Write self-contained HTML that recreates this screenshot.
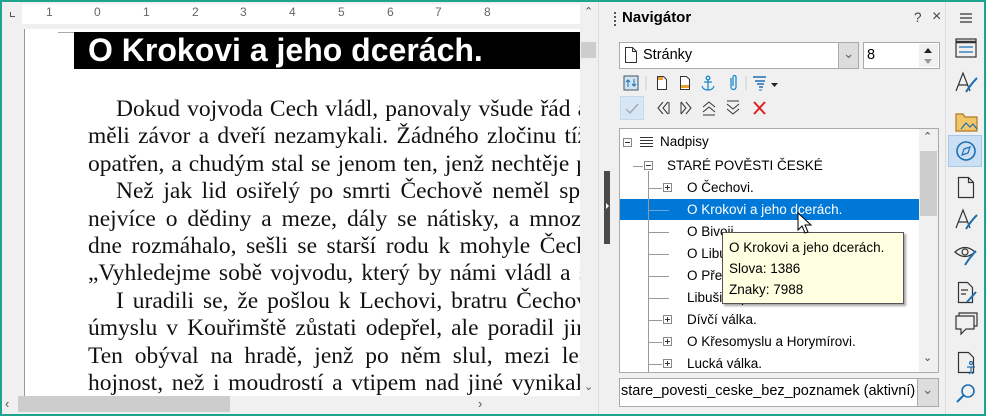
<!DOCTYPE html>
<html><head><meta charset="utf-8"><style>
*{margin:0;padding:0;box-sizing:border-box}
body{width:986px;height:416px;overflow:hidden;background:#f0f0f0;font-family:"Liberation Sans",sans-serif;position:relative}
.abs{position:absolute}
#frame{left:0;top:0;width:986px;height:416px;border:2px solid #1fa58f;z-index:50;pointer-events:none}
.doc{font-family:"Liberation Serif",serif;font-size:23.5px;color:#111;white-space:nowrap}
.doc div{width:500px;text-align:justify;text-align-last:justify;white-space:normal;height:27.4px;overflow:visible}
.ui{font-family:"Liberation Sans","DejaVu Sans",sans-serif;font-size:13.5px;color:#000;white-space:nowrap}
.row{position:absolute;left:0;height:22px;line-height:22px}
.pm{position:absolute;width:9px;height:9px;border:1px solid #888;background:#fff}
.pm:after{content:"";position:absolute;left:1px;top:3px;width:5px;height:1px;background:#333}
.pm.p:before{content:"";position:absolute;left:3px;top:1px;width:1px;height:5px;background:#333}
.hl{position:absolute;height:1px;background:#999}
.vl{position:absolute;width:1px;background:#999}
</style></head><body>
<div id="frame" class="abs"></div>
<div class="abs" style="left:22px;top:4px;width:558px;height:20px;background:#fff"></div>
<div class="abs" style="left:10px;top:12px;width:5px;height:5px;border-left:1px solid #555;border-bottom:1px solid #555"></div>
<div class="abs ui" style="left:22px;top:5px;width:558px;font-size:12px;color:#666">
<span class="abs" style="left:24px">1</span><span class="abs" style="left:72px">0</span><span class="abs" style="left:121px">1</span><span class="abs" style="left:170px">2</span><span class="abs" style="left:218px">3</span><span class="abs" style="left:267px">4</span><span class="abs" style="left:316px">5</span><span class="abs" style="left:365px">6</span><span class="abs" style="left:413px">7</span><span class="abs" style="left:462px">8</span>
</div>
<div class="abs" style="left:24px;top:29px;width:556px;height:367px;background:#fff;border-left:1px solid #999;overflow:hidden">
 <div class="abs" style="left:33px;top:3px;width:20px;height:1px;background:#aaa"></div>
 <div class="abs" style="left:49px;top:3px;width:520px;height:37px;background:#000;color:#fff;font-weight:bold;font-size:32px;line-height:37px;padding-left:14px;white-space:nowrap">O Krokovi a jeho dcerách.</div>
 <div class="doc abs" style="left:63px;top:67px;line-height:27.4px">
  <div style="padding-left:28px">Dokud vojvoda Cech vládl, panovaly všude řád a</div>
  <div>měli závor a dveří nezamykali. Žádného zločinu tíž</div>
  <div>opatřen, a chudým stal se jenom ten, jenž nechtěje p</div>
  <div style="padding-left:28px">Než jak lid osiřelý po smrti Čechově neměl spr</div>
  <div>nejvíce o dědiny a meze, dály se nátisky, a mnozí</div>
  <div>dne rozmáhalo, sešli se starší rodu k mohyle Čech</div>
  <div>„Vyhledejme sobě vojvodu, který by námi vládl a s</div>
  <div style="padding-left:28px">I uradili se, že pošlou k Lechovi, bratru Čechov</div>
  <div>úmyslu v Kouřimště zůstati odepřel, ale poradil jin</div>
  <div>Ten obýval na hradě, jenž po něm slul, mezi les</div>
  <div>hojnost, než i moudrostí a vtipem nad jiné vynikal.</div>
 </div>
</div>
<div class="abs" style="left:580px;top:4px;width:17px;height:392px;background:#f0f0f0"></div>
<div class="abs ui" style="left:584px;top:5px;font-size:11px;color:#555">&#8963;</div>
<div class="abs" style="left:581px;top:42px;width:15px;height:16px;background:#cdcdcd"></div>
<div class="abs ui" style="left:584px;top:380px;font-size:11px;color:#555">&#8964;</div>
<div class="abs" style="left:18px;top:396px;width:212px;height:16px;background:#cdcdcd"></div>
<div class="abs ui" style="left:5px;top:396px;font-size:13px;color:#555">&lsaquo;</div>
<div class="abs ui" style="left:478px;top:396px;font-size:13px;color:#555">&rsaquo;</div>
<div class="abs" style="left:598px;top:2px;width:13px;height:412px;background:#f0f0f0;border-left:1px solid #ddd"></div>
<div class="abs" style="left:604px;top:171px;width:6px;height:73px;background:#4a4a4a"></div>
<div class="abs" style="left:606px;top:203px;width:0;height:0;border-left:3px solid #fff;border-top:3px solid transparent;border-bottom:3px solid transparent"></div>
<div class="abs" style="left:614px;top:12px;width:2px;height:14px;border-left:2px dotted #555"></div>
<div class="abs ui" style="left:622px;top:9px;font-weight:bold;font-size:15px">Navigátor</div>
<div class="abs ui" style="left:914px;top:10px;color:#444">?</div>
<div class="abs ui" style="left:932px;top:8px;color:#444;font-size:16px">×</div>
<div class="abs" style="left:619px;top:42px;width:240px;height:27px;background:#fff;border:1px solid #aaa"></div>
<div class="abs" style="left:838px;top:43px;width:20px;height:25px;background:#ddd;border-left:1px solid #aaa"></div>
<div class="abs ui" style="left:843px;top:46px;color:#666">&#8964;</div>
<svg class="abs" style="left:624px;top:46px" width="14" height="18"><path d="M1.5 1.5h7l4 4v11h-11z M8.5 1.5v4h4" fill="#fff" stroke="#333"/></svg>
<div class="abs ui" style="left:643px;top:47px;font-size:14.5px">Stránky</div>
<div class="abs" style="left:863px;top:42px;width:77px;height:27px;background:#fff;border:1px solid #aaa"></div>
<div class="abs ui" style="left:867px;top:47px;font-size:14.5px">8</div>
<div class="abs" style="left:919px;top:44px;width:19px;height:23px;background:#f0f0f0"></div>
<div class="abs" style="left:924px;top:48px;border-left:4px solid transparent;border-right:4px solid transparent;border-bottom:5px solid #222"></div>
<div class="abs" style="left:924px;top:59px;border-left:4px solid transparent;border-right:4px solid transparent;border-top:5px solid #999"></div>
<svg class="abs" style="left:622px;top:73px" width="170" height="20">
<rect x="2" y="3" width="14" height="14" fill="#cfe3f3" stroke="#456"/><path d="M6 14V7M4 9l2-2 2 2M12 6v7M10 11l2 2 2-2" stroke="#1f6fb0" fill="none"/>
<line x1="24" y1="3" x2="24" y2="17" stroke="#ccc"/>
<path d="M35.5 3.5h6l3 3v10h-9z" fill="#fff" stroke="#333"/><rect x="36" y="4" width="5" height="3" fill="#e9a030"/>
<path d="M58.5 3.5h6l3 3v10h-9z" fill="#fff" stroke="#333"/><rect x="59" y="12" width="8" height="3" fill="#e9a030"/>
<g stroke="#1f8ac9" fill="none" stroke-width="1.3"><circle cx="86" cy="5" r="1.8"/><path d="M86 7v10M82 9h8M80 13q1 4 6 4 5 0 6-4"/></g>
<path d="M109 5v9a2.5 2.5 0 0 0 5 0V4a1.5 1.5 0 0 0-3 0v9" stroke="#1f8ac9" fill="none" stroke-width="1.3"/>
<line x1="124" y1="3" x2="124" y2="17" stroke="#ccc"/>
<g stroke="#1f6fb0" stroke-width="1.5"><path d="M131 4h13M133 8h10M135 11h7M137 14h4"/></g><path d="M137 17h3" stroke="#1f6fb0"/>
<path d="M149 10h7l-3.5 4z" fill="#222"/>
</svg>
<div class="abs" style="left:620px;top:96px;width:24px;height:24px;background:#d6e6f4;border:1px solid #c4d8ea"></div>
<svg class="abs" style="left:622px;top:98px" width="160" height="20">
<path d="M4 11l4 4 8-9" stroke="#aab" fill="none" stroke-width="1.5"/>
<g stroke="#333" fill="none"><path d="M41 4l-5 6 5 6M46 4l-5 6 5 6M47 4v12"/><path d="M59 4v12M59 4l5 6-5 6M64 4l5 6-5 6"/><path d="M81 9l6-5 6 5M81 14l6-5 6 5M81 17h12"/><path d="M105 3h12M105 6l6 5 6-5M105 11l6 5 6-5"/></g>
<path d="M132 4l11 12M143 4l-11 12" stroke="#e02020" stroke-width="2"/>
</svg>
<div class="abs" style="left:619px;top:128px;width:320px;height:245px;background:#fff;border:1px solid #aaa;overflow:hidden">
 <div class="abs" style="left:299px;top:0;width:19px;height:243px;background:#f0f0f0"></div>
 <div class="abs" style="left:300px;top:22px;width:17px;height:65px;background:#cdcdcd"></div>
 <div class="abs ui" style="left:303px;top:1px;font-size:11px;color:#444">&#8963;</div>
 <div class="abs ui" style="left:303px;top:222px;font-size:11px;color:#444">&#8964;</div>
 <div class="abs" style="left:0;top:70px;width:299px;height:21px;background:#0078d7"></div>
 <div class="vl" style="left:28px;top:42px;height:210px"></div>
 <div class="hl" style="left:13px;top:37px;width:10px"></div>
 <div class="pm" style="left:3px;top:9px"></div>
 <svg class="abs" style="left:20px;top:7px" width="14" height="12"><path d="M0 1.5h13M0 4.5h13M0 7.5h13M0 10.5h13" stroke="#333"/></svg>
 <div class="row ui" style="left:40px;top:2px">Nadpisy</div>
 <div class="pm" style="left:24px;top:32px"></div>
 <div class="row ui" style="left:47px;top:26px">STARÉ POVĚSTI ČESKÉ</div>
 <div class="hl" style="left:29px;top:59px;width:13px"></div><div class="pm p" style="left:43px;top:54px"></div>
 <div class="row ui" style="left:67px;top:48px">O Čechovi.</div>
 <div class="hl" style="left:29px;top:81px;width:20px;background:#6aa7e0"></div>
 <div class="row ui" style="left:67px;top:70px;color:#fff">O Krokovi a jeho dcerách.</div>
 <div class="hl" style="left:29px;top:103px;width:20px"></div><div class="row ui" style="left:67px;top:92px">O Bivoji.</div>
 <div class="hl" style="left:29px;top:125px;width:20px"></div><div class="row ui" style="left:67px;top:114px">O Libuši.</div>
 <div class="hl" style="left:29px;top:147px;width:20px"></div><div class="row ui" style="left:67px;top:136px">O Přemyslovi.</div>
 <div class="hl" style="left:29px;top:169px;width:20px"></div><div class="row ui" style="left:67px;top:158px">Libušina proroctví.</div>
 <div class="hl" style="left:29px;top:191px;width:13px"></div><div class="pm p" style="left:43px;top:186px"></div><div class="row ui" style="left:67px;top:180px">Dívčí válka.</div>
 <div class="hl" style="left:29px;top:213px;width:13px"></div><div class="pm p" style="left:43px;top:208px"></div><div class="row ui" style="left:67px;top:202px">O Křesomyslu a Horymírovi.</div>
 <div class="hl" style="left:29px;top:235px;width:13px"></div><div class="pm p" style="left:43px;top:230px"></div><div class="row ui" style="left:67px;top:224px">Lucká válka.</div>
</div>
<div class="abs ui" style="left:722px;top:232px;width:182px;height:72px;background:#ffffe1;border:1px solid #555;box-shadow:2px 2px 2px rgba(0,0,0,.35);padding:4px 0 0 6px;line-height:21px;font-size:13.5px">O Krokovi a jeho dcerách.<br>Slova: 1386<br>Znaky: 7988</div>
<svg class="abs" style="left:797px;top:212px" width="16" height="24"><path d="M1 1v17l4-4 3 7 3-1-3-7h6z" fill="#fff" stroke="#000"/></svg>
<div class="abs" style="left:619px;top:378px;width:320px;height:29px;background:#fff;border:1px solid #aaa"></div>
<div class="abs" style="left:917px;top:379px;width:21px;height:27px;background:#ddd;border-left:1px solid #aaa"></div>
<div class="abs ui" style="left:922px;top:382px;color:#666">&#8964;</div>
<div class="abs ui" style="left:621px;top:383px;font-size:14.5px">stare_povesti_ceske_bez_poznamek (aktivní)</div>
<div class="abs" style="left:945px;top:2px;width:39px;height:412px;background:#f0f0f0;border-left:1px solid #ddd"></div>
<div class="abs" style="left:948px;top:135px;width:34px;height:32px;background:#cce0f5;border:1px solid #a8c8e8"></div>
<svg class="abs" style="left:950px;top:2px" width="34" height="412">
<g fill="none" stroke="#333" stroke-width="1.2">
<path d="M10 12h12M10 16h12M10 20h12"/>
<rect x="6" y="37" width="20" height="18"/><path d="M6 40h20" stroke-width="2.5"/><path d="M9 45h14M9 50h14" stroke="#1f6fb0"/>
<path d="M6 89l7-18 7 18M8.5 83h9"/><path d="M16 90q5-8 11-14" stroke="#1f6fb0" stroke-width="2"/>
<path d="M6 112h7l2 3h12v14H6z" fill="#f1c56a" stroke="#b07a20"/><path d="M11 127l5-6 4 4 3-3 4 5" stroke="#1f6fb0"/>
<circle cx="16" cy="149" r="9" stroke="#1f6fb0" stroke-width="1.6"/><path d="M20 145l-6 2-2 6 6-2z" stroke="#1f6fb0"/>
<path d="M8.5 175.5h10l5 5v15h-15z M18.5 175.5v5h5"/>
<path d="M6 226l7-18 7 18M8.5 220h9"/><path d="M16 227q5-8 11-14" stroke="#1f6fb0" stroke-width="2"/>
<path d="M5 250q10-9 20 0q-10 9-20 0z"/><circle cx="15" cy="250" r="3"/><path d="M15 263q5-8 11-14" stroke="#1f6fb0" stroke-width="2"/>
<path d="M8.5 280.5h9l5 5v15h-14z"/><path d="M11 288h7M11 292h5" /><path d="M17 300l9-10" stroke="#1f6fb0" stroke-width="2"/>
<path d="M6 314h18v13h-8l-5 5v-5H6z"/><path d="M9 314v-3h18v13h-3"/>
<path d="M8.5 350.5h10l5 5v15h-15z"/><circle cx="21" cy="361" r="1.5" stroke="#1f6fb0"/><path d="M17 365h8M21 365v5M19 372l2-2 2 2" stroke="#1f6fb0"/>
<circle cx="18" cy="389" r="6" stroke="#1f6fb0" stroke-width="1.6"/><path d="M14 393l-7 7" stroke="#1f6fb0" stroke-width="2"/>
</g></svg>
</body></html>
